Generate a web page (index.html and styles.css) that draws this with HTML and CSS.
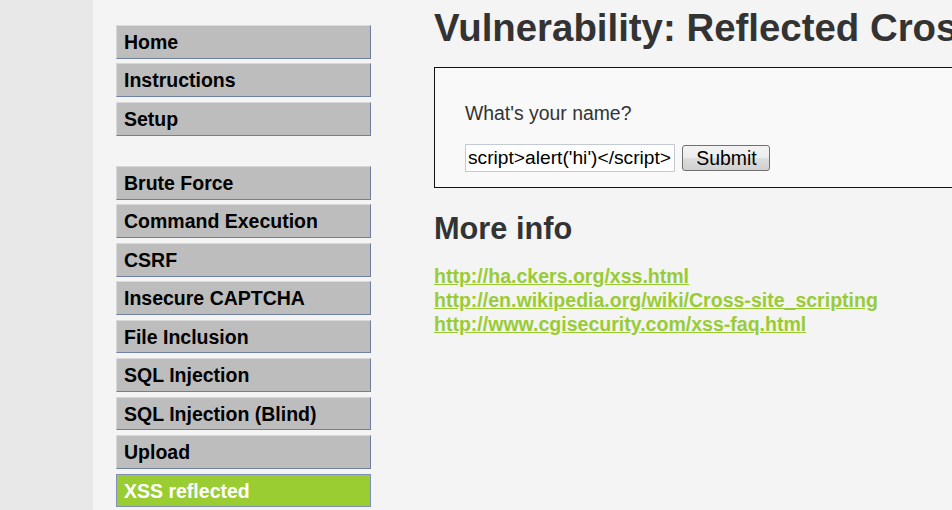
FILE: index.html
```html
<!DOCTYPE html>
<html lang="en">
<head>
<meta charset="utf-8">
<title>Vulnerability: Reflected Cross Site Scripting (XSS)</title>
<link rel="stylesheet" href="styles.css">
</head>
<body>
<div class="page">
  <div class="strip"></div>
  <nav class="menu">
    <ul class="group">
      <li><a href="#">Home</a></li>
      <li><a href="#">Instructions</a></li>
      <li><a href="#">Setup</a></li>
    </ul>
    <ul class="group">
      <li><a href="#">Brute Force</a></li>
      <li><a href="#">Command Execution</a></li>
      <li><a href="#">CSRF</a></li>
      <li><a href="#">Insecure CAPTCHA</a></li>
      <li><a href="#">File Inclusion</a></li>
      <li><a href="#">SQL Injection</a></li>
      <li><a href="#">SQL Injection (Blind)</a></li>
      <li><a href="#">Upload</a></li>
      <li class="selected"><a href="#">XSS reflected</a></li>
    </ul>
  </nav>
  <main class="main">
    <h1 class="title">Vulnerability: Reflected Cross Site Scripting (XSS)</h1>
    <div class="box">
      <form class="form" action="#">
        <p class="label">What's your name?</p>
        <div class="row">
          <input class="field" type="text" name="name" value="&lt;script&gt;alert('hi')&lt;/script&gt;">
          <button class="btn" type="button">Submit</button>
        </div>
      </form>
    </div>
    <h2 class="subtitle">More info</h2>
    <div class="links">
      <a href="#">http://ha.ckers.org/xss.html</a>
      <a href="#">http://en.wikipedia.org/wiki/Cross-site_scripting</a>
      <a href="#">http://www.cgisecurity.com/xss-faq.html</a>
    </div>
  </main>
</div>
</body>
</html>
```
FILE: styles.css
```css
html, body {
  margin: 0;
  padding: 0;
}
body {
  background: #f4f4f4;
  font-family: "Liberation Sans", Arial, sans-serif;
  overflow: hidden;
}
.page {
  display: flex;
  min-height: 510px;
}
.strip {
  flex: none;
  width: 93px;
  background: #e8e8e8;
}
.menu {
  flex: none;
  width: 255px;
  margin-left: 23px;
  padding-top: 25px;
}
.group {
  list-style: none;
  margin: 0;
  padding: 0;
}
.group + .group {
  margin-top: 30.4px;
}
.group li {
  margin-bottom: 4.9px;
}
.group a {
  display: block;
  box-sizing: border-box;
  height: 33.6px;
  padding: 5px 7px 0;
  line-height: 22px;
  font-size: 19.5px;
  font-weight: bold;
  color: #000;
  text-decoration: none;
  background: #bdbdbd;
  border: 1px solid;
  border-color: #d8d8d8 #6f7fa0 #6f7fa0 #d8d8d8;
}
.group li.selected a {
  background: #9acd32;
  color: #fff;
  border-color: #8090b8;
}
.main {
  flex: none;
  width: 640px;
  margin-left: 63px;
  padding-top: 6px;
}
.title {
  margin: 0;
  font-size: 38.4px;
  line-height: 44px;
  font-weight: bold;
  color: #333;
  white-space: nowrap;
}
.box {
  margin-top: 16.7px;
  border: 1px solid #111;
  background: #f8f9f8;
  padding: 34.4px 30px 14.6px;
}
.form {
  margin: 0;
}
.label {
  margin: 0;
  font-size: 19.4px;
  line-height: 22px;
  color: #333;
}
.row {
  display: flex;
  align-items: center;
  gap: 6.6px;
  margin-top: 19.8px;
}
.field {
  box-sizing: border-box;
  width: 210.4px;
  height: 28.4px;
  margin: 0;
  padding: 0 2px;
  border: 1px solid #c3cad6;
  background: #fff;
  font-family: "Liberation Sans", Arial, sans-serif;
  font-size: 19.2px;
  color: #000;
  text-indent: -11.2px;
  outline: none;
}
.btn {
  box-sizing: border-box;
  width: 88px;
  height: 26.4px;
  margin: 0;
  padding: 0 0 0 1px;
  border: 1px solid #707070;
  border-radius: 3px;
  background: linear-gradient(#f3f3f3, #ececec 50%, #dedede 50%, #d0d0d0);
  font-family: "Liberation Sans", Arial, sans-serif;
  font-size: 19.4px;
  color: #000;
}
.subtitle {
  margin: 23.5px 0 0;
  font-size: 30.72px;
  line-height: 35px;
  font-weight: bold;
  color: #333;
}
.links {
  display: flex;
  flex-direction: column;
  align-items: flex-start;
  margin-top: 18.5px;
  font-size: 19.55px;
  line-height: 23.9px;
  font-weight: bold;
}
.links a {
  color: #99cc33;
  text-decoration: underline;
}
```
